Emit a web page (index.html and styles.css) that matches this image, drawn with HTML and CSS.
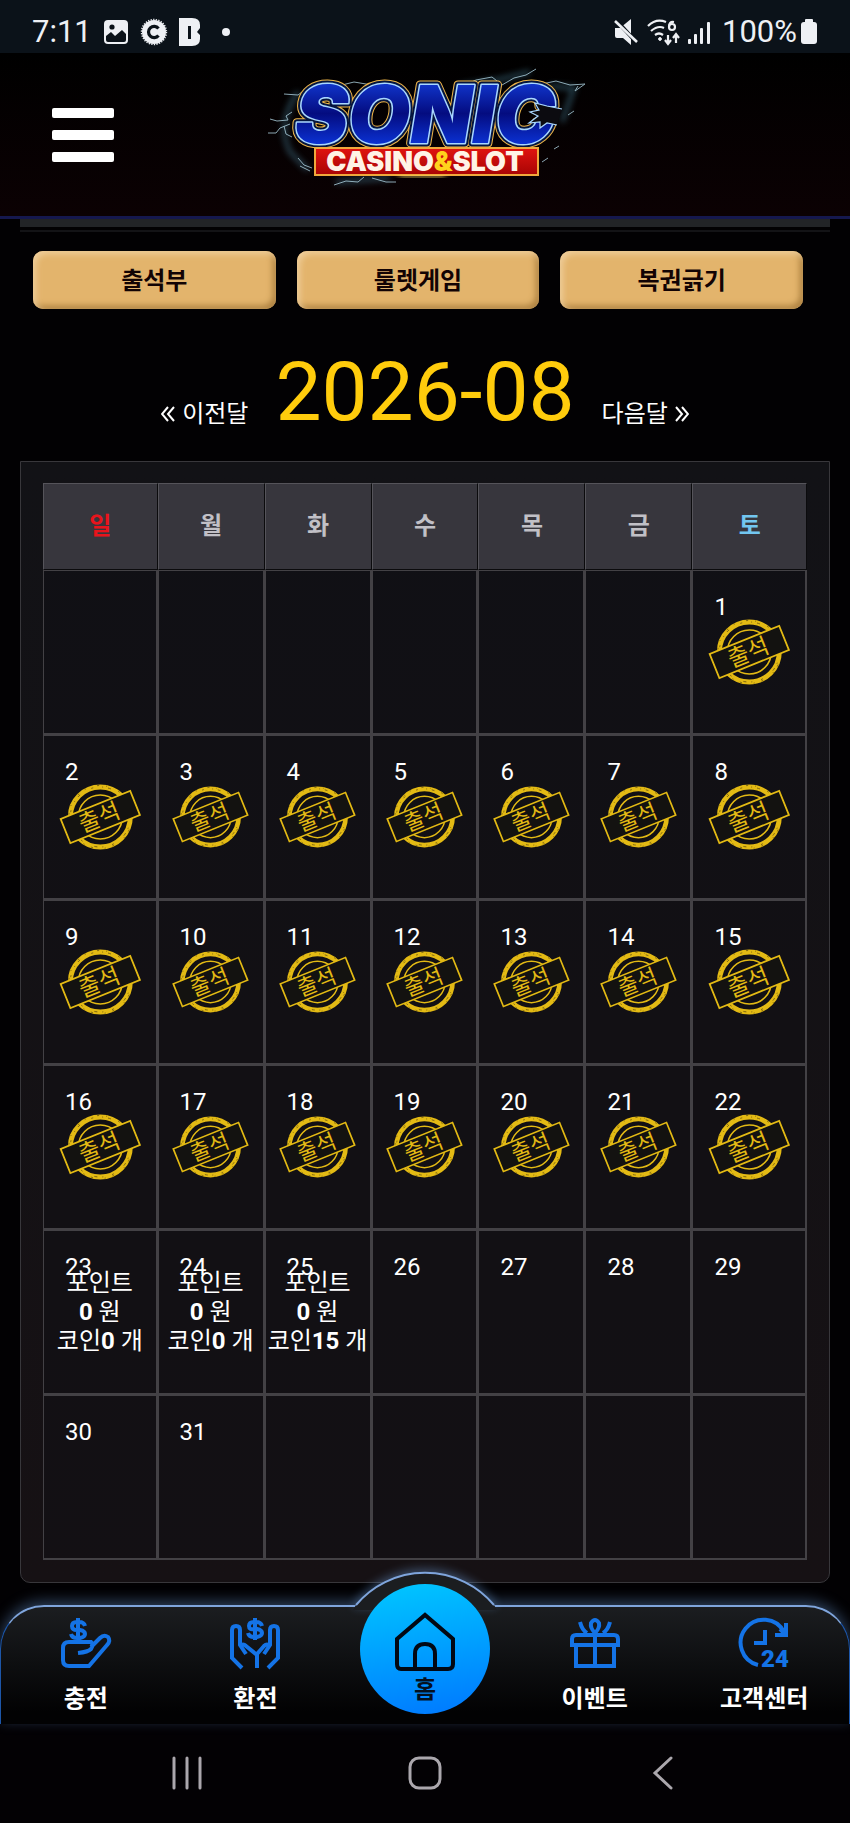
FILE: index.html
```html
<!DOCTYPE html>
<html lang="ko">
<head>
  <meta charset="UTF-8" />
  <meta name="viewport" content="width=device-width, initial-scale=1.0" />
  <title>출석부</title>
  <link rel="stylesheet" href="styles.css">
</head>
<body>
  <!-- shared symbols -->
  <svg class="defs" width="0" height="0" aria-hidden="true">
    <symbol id="stamp" viewBox="0 0 82 68">
      <g fill="none" stroke="#e3ba14">
        <circle cx="41" cy="34" r="30" stroke-width="5" />
        <circle cx="41" cy="34" r="22" stroke-width="1.6" />
        <circle cx="41" cy="34" r="30" stroke="#7a6310" stroke-width="1" stroke-dasharray="2 9 1 5 3 13" />
        <circle cx="41" cy="34" r="31.5" stroke="#7a6310" stroke-width="1" stroke-dasharray="1 12 2 7" />
        <g transform="rotate(-22 41 34)">
          <rect x="3.5" y="21" width="75" height="26" fill="#131210" stroke-width="1.8" />
        </g>
      </g>
      <text class="stamp-text" x="40" y="42" text-anchor="middle" transform="rotate(-22 41 34)">출석</text>
    </symbol>
  </svg>

  <div class="status-bar">
    <div class="status-left">
      <span class="clock">7:11</span>
      <svg width="26" height="28" viewBox="0 0 26 28">
        <rect x="1" y="2" width="24" height="24" rx="4" fill="#eef0f4" />
        <circle cx="9" cy="9" r="2.6" fill="#0b1219" />
        <path d="M3 18l5-4 4 4 7-6 4 4v6a2 2 0 0 1-2 2H5a2 2 0 0 1-2-2z" fill="#0b1219" />
      </svg>
      <svg width="28" height="28" viewBox="0 0 28 28">
        <circle cx="14" cy="14" r="12" fill="#eef0f4" />
        <circle cx="14" cy="14" r="12.4" fill="none" stroke="#eef0f4" stroke-width="1.6" stroke-dasharray="1.3 1.3" />
        <path d="M18.5 10.5a5.6 5.6 0 1 0 0 7" fill="none" stroke="#0b1219" stroke-width="3.2" />
      </svg>
      <svg width="22" height="28" viewBox="0 0 22 28">
        <path d="M0 0h13q8 0 8 7v3l-3 4 3 3v4q0 7-8 7H0z" fill="#eef0f4" />
        <path d="M10.5 8v13" stroke="#0b1219" stroke-width="3" />
      </svg>
      <i class="dot"></i>
    </div>
    <div class="status-right">
      <svg width="26" height="28" viewBox="0 0 26 28">
        <path d="M2 10h5l11-9v26l-8-7H4a2 2 0 0 1-2-2z" fill="#eef0f4" />
        <path d="M1 0l24 26" stroke="#0b1219" stroke-width="4" />
        <path d="M2 3l22 21" stroke="#eef0f4" stroke-width="2.6" />
      </svg>
      <svg width="34" height="28" viewBox="0 0 34 28" fill="none" stroke="#eef0f4" stroke-width="2.2">
        <path d="M2 8Q10 0 20 4M5 13q7-6 13-3M9 17q4-3 8 0" />
        <circle cx="14" cy="21" r="1.4" fill="#eef0f4" stroke-width="1" />
        <path d="M28 4q-5-1-5 5" />
        <circle cx="26" cy="9" r="3" />
        <path d="M22 17v8m-3-3l3 4 3-4M30 25v-8m-3 3l3-4 3 4" />
      </svg>
      <svg width="24" height="28" viewBox="0 0 24 28" fill="#eef0f4">
        <rect x="1" y="21" width="3" height="5" rx="1" />
        <rect x="7" y="16" width="3" height="10" rx="1" />
        <rect x="13" y="10" width="3" height="16" rx="1" />
        <rect x="20" y="4" width="3" height="22" rx="1" />
      </svg>
      <span class="battery-text">100%</span>
      <svg width="18" height="28" viewBox="0 0 18 28" fill="#eef0f4">
        <rect x="5" y="1" width="8" height="5" rx="1" />
        <rect x="1" y="4" width="16" height="22" rx="3" />
      </svg>
    </div>
  </div>

  <header class="site-header">
    <button class="menu-button" aria-label="메뉴"><i></i><i></i><i></i></button>
    <a href="#" class="logo" aria-label="Sonic Casino &amp; Slot">
      <svg width="340" height="150" viewBox="-5 0 340 150">
        <defs>
          <linearGradient id="blueFill" x1="0" y1="0" x2="0" y2="1">
            <stop offset="0.1" stop-color="#1440e0" />
            <stop offset=".5" stop-color="#040c80" />
            <stop offset="0.9" stop-color="#0d3be8" />
          </linearGradient>
          <linearGradient id="redFill" x1="0" y1="0" x2="0" y2="1">
            <stop offset="0" stop-color="#e01410" />
            <stop offset="1" stop-color="#a80404" />
          </linearGradient>
          <filter id="glow" x="-20%" y="-60%" width="140%" height="220%">
            <feGaussianBlur stdDeviation="3" />
          </filter>
        </defs>
        <g fill="none" stroke="#5aa5c4" stroke-width="4" filter="url(#glow)" opacity=".45">
          <path d="M38 32q-22 32-8 60l18 18M200 26l38-6 32-8M290 26l24 2-12 34M76 122l54-4" />
        </g>
        <g fill="none" stroke="#b9dfee" stroke-width="1" opacity=".75">
          <path d="M46 29l-8 6-14-1M32 52l-6 4 2 4-11 1-7-2M30 64l-10 4-4 5-8 0M24 66l2 8 6 3M38 98l6 7 8 3M40 106l10 5" />
          <path d="M82 25l12-3 18 3M200 27l16-7 16-3 10 8 12-7 12-3 10-6M282 24l14-3 14 4 15-1-10 7 3-5M308 55l6-4M294 89l5-3" />
          <path d="M74 125l12-4 12 1 6-5M112 118l14 4 10 0M282 102l6-4" />
        </g>
        <g class="logo-main" stroke-linejoin="round">
          <text x="35" y="83" fill="#ffdf7c" stroke="#eeb548" stroke-width="9">SONIC</text>
          <text x="35" y="83" fill="#04153e" stroke="#04153e" stroke-width="7">SONIC</text>
          <text x="35" y="83" fill="#a9d7ff" stroke="#a9d7ff" stroke-width="3">SONIC</text>
          <text x="35" y="83" fill="url(#blueFill)">SONIC</text>
        </g>
        <path d="M302 49l-15-3-12-3 4 7-9 2 8 4-9 7 11-1 0 6 7-5 10 2" fill="#0c0b10" stroke="#a9d7ff" stroke-width="1.2" />
        <rect x="55" y="88" width="223" height="27" fill="url(#redFill)" stroke="#f0a83c" stroke-width="2" />
        <path d="M140 116h44v1h-44z" stroke="#ffe36a" stroke-width="2" filter="url(#glow)" />
        <text class="logo-sub" x="165" y="111" text-anchor="middle">CASINO<tspan fill="#ffd21c">&amp;</tspan>SLOT</text>
      </svg>
    </a>
  </header>

  <main>
    <div class="top-strip"></div>

    <div class="tabs">
      <button>출석부</button>
      <button>룰렛게임</button>
      <button>복권긁기</button>
    </div>

    <div class="month-nav">
      <a href="#"><svg width="14" height="16" viewBox="0 0 14 16"><path d="M7 1L1 8l6 7M13 1L7 8l6 7" /></svg>이전달</a>
      <h1>2026-08</h1>
      <a href="#">다음달<svg width="14" height="16" viewBox="0 0 14 16"><path d="M1 1l6 7-6 7M7 1l6 7-6 7" /></svg></a>
    </div>

    <section class="panel">
      <table class="calendar">
        <colgroup><col class="edge"><col><col><col><col><col><col class="edge"></colgroup>
        <thead>
          <tr>
            <th class="sun">일</th><th>월</th><th>화</th><th>수</th><th>목</th><th>금</th><th class="sat">토</th>
          </tr>
        </thead>
        <tbody>
          <tr>
            <td></td><td></td><td></td><td></td><td></td><td></td>
            <td><div class="day"><span>1</span><svg class="stamp"><use href="#stamp" /></svg></div></td>
          </tr>
          <tr>
            <td><div class="day"><span>2</span><svg class="stamp"><use href="#stamp" /></svg></div></td>
            <td><div class="day"><span>3</span><svg class="stamp"><use href="#stamp" /></svg></div></td>
            <td><div class="day"><span>4</span><svg class="stamp"><use href="#stamp" /></svg></div></td>
            <td><div class="day"><span>5</span><svg class="stamp"><use href="#stamp" /></svg></div></td>
            <td><div class="day"><span>6</span><svg class="stamp"><use href="#stamp" /></svg></div></td>
            <td><div class="day"><span>7</span><svg class="stamp"><use href="#stamp" /></svg></div></td>
            <td><div class="day"><span>8</span><svg class="stamp"><use href="#stamp" /></svg></div></td>
          </tr>
          <tr>
            <td><div class="day"><span>9</span><svg class="stamp"><use href="#stamp" /></svg></div></td>
            <td><div class="day"><span>10</span><svg class="stamp"><use href="#stamp" /></svg></div></td>
            <td><div class="day"><span>11</span><svg class="stamp"><use href="#stamp" /></svg></div></td>
            <td><div class="day"><span>12</span><svg class="stamp"><use href="#stamp" /></svg></div></td>
            <td><div class="day"><span>13</span><svg class="stamp"><use href="#stamp" /></svg></div></td>
            <td><div class="day"><span>14</span><svg class="stamp"><use href="#stamp" /></svg></div></td>
            <td><div class="day"><span>15</span><svg class="stamp"><use href="#stamp" /></svg></div></td>
          </tr>
          <tr>
            <td><div class="day"><span>16</span><svg class="stamp"><use href="#stamp" /></svg></div></td>
            <td><div class="day"><span>17</span><svg class="stamp"><use href="#stamp" /></svg></div></td>
            <td><div class="day"><span>18</span><svg class="stamp"><use href="#stamp" /></svg></div></td>
            <td><div class="day"><span>19</span><svg class="stamp"><use href="#stamp" /></svg></div></td>
            <td><div class="day"><span>20</span><svg class="stamp"><use href="#stamp" /></svg></div></td>
            <td><div class="day"><span>21</span><svg class="stamp"><use href="#stamp" /></svg></div></td>
            <td><div class="day"><span>22</span><svg class="stamp"><use href="#stamp" /></svg></div></td>
          </tr>
          <tr>
            <td><div class="day"><span>23</span><p>포인트<br><b>0</b> 원<br>코인<b>0</b> 개</p></div></td>
            <td><div class="day"><span>24</span><p>포인트<br><b>0</b> 원<br>코인<b>0</b> 개</p></div></td>
            <td><div class="day"><span>25</span><p>포인트<br><b>0</b> 원<br>코인<b>15</b> 개</p></div></td>
            <td><div class="day"><span>26</span></div></td>
            <td><div class="day"><span>27</span></div></td>
            <td><div class="day"><span>28</span></div></td>
            <td><div class="day"><span>29</span></div></td>
          </tr>
          <tr>
            <td><div class="day"><span>30</span></div></td>
            <td><div class="day"><span>31</span></div></td>
            <td></td><td></td><td></td><td></td><td></td>
          </tr>
        </tbody>
      </table>
    </section>
  </main>

  <nav class="bottom-nav">
    <svg class="hump" width="200" height="70" viewBox="0 0 200 70" aria-hidden="true">
      <path d="M28 54l3-5a90 90 0 0 1 138 0l3 5z" fill="#1b1d20" />
      <path d="M31 49a90 90 0 0 1 138 0" fill="none" stroke="#7fa5dc" stroke-width="2" />
    </svg>
    <a href="#">
      <svg width="50" height="50" viewBox="0 0 50 50">
        <path d="M24 8q-1-4-6-4h-2q-5 0-5 4t5 4h3q5 1 5 4t-5 4h-3q-5 0-6-4M17 0v24M2 30q0-6 6-6h22q3 3 0 7-3 3-13 4M30 29l9-9q4-4 8-1 3 4-1 8L28 48H8q-6 0-6-6V30" />
      </svg>
      충전
    </a>
    <a href="#">
      <svg width="50" height="50" viewBox="0 0 50 50">
        <path d="M32 8q-1-4-6-4h-2q-5 0-5 4t5 3h3q5 1 5 4t-5 4h-3q-5 0-6-4M25 0v22" />
        <path d="M12 50L2 40V12q0-4 4-4t4 4v15l6 9M10 28q3-3 6 0l11 9M27 34v16M38 50l10-10V12q0-4-4-4t-4 4v15l-6 9M40 28q-3-3-6 0l-7 8" />
      </svg>
      환전
    </a>
    <a href="#" class="home">
      <svg width="60" height="60" viewBox="0 0 60 60">
        <path d="M6 57q-4 0-4-5V27L30 3l28 24v25q0 5-5 5zM20 57V42q0-10 10-10t10 10v15" />
      </svg>
      홈
    </a>
    <a href="#">
      <svg width="50" height="50" viewBox="0 0 50 50">
        <path d="M2 27v-6q0-4 4-4h38q4 0 4 4v6zM6 27v21h38V27M25 17v31M25 15q-5-5-4-10 4-6 8 0 1 5-4 10zM10 4q2 8 7 11M40 4q-2 8-7 11" />
      </svg>
      이벤트
    </a>
    <a href="#">
      <svg width="50" height="50" viewBox="0 0 50 50">
        <path d="M19 47A23 23 0 1 1 45 14M36 17h11V5M46 16l-5-5M26 12v13H15" />
        <text class="icon-24" x="22" y="49">24</text>
      </svg>
      고객센터
    </a>
  </nav>

  <div class="system-nav">
    <button aria-label="최근 앱"><svg width="34" height="34" viewBox="0 0 34 34"><path d="M4 2v30M17 2v30M30 2v30" /></svg></button>
    <button aria-label="홈 화면"><svg width="34" height="34" viewBox="0 0 34 34"><rect x="2" y="2" width="30" height="30" rx="9" /></svg></button>
    <button aria-label="뒤로"><svg width="34" height="34" viewBox="0 0 34 34"><path d="M25 2L9 17l16 15" /></svg></button>
  </div>
</body>
</html>
```
FILE: styles.css
```css
* {
  box-sizing: border-box;
}

body {
  margin: 0;
  background-color: #020103;
  color: #ffffff;
  font-family: Roboto, "Noto Sans CJK KR", sans-serif;
  font-size: 24px;
}

a {
  color: inherit;
  text-decoration: none;
}

button {
  border: 0;
  padding: 0;
  background: none;
  color: inherit;
  font: inherit;
}

svg {
  display: block;
}

.defs {
  position: absolute;
}

/* phone status bar */
.status-bar {
  display: flex;
  justify-content: space-between;
  height: 53px;
  padding: 10px 32px 0;
  background-color: #0b1219;
  color: #eef0f4;
}

.status-left,
.status-right {
  display: flex;
  align-items: center;
  height: 44px;
}

.status-left {
  gap: 11px;
}

.status-right {
  gap: 7px;
}

.clock,
.battery-text {
  font-size: 31px;
  line-height: 44px;
}

.battery-text {
  margin: 0 -4px 0 4px;
}

.dot {
  width: 8px;
  height: 8px;
  margin-left: 10px;
  border-radius: 50%;
  background-color: #eef0f4;
}

/* header */
.site-header {
  display: grid;
  grid-template-columns: 1fr auto 1fr;
  align-items: center;
  height: 166px;
  border-bottom: 3px solid #15184e;
  background: linear-gradient(#000000, #0b0103);
}

.menu-button {
  display: grid;
  gap: 12px;
  width: 62px;
  margin-left: 52px;
}

.menu-button i {
  height: 10px;
  border-radius: 2px;
  background-color: #ffffff;
}

.logo-main {
  font-family: Inter, sans-serif;
  font-size: 80px;
  font-weight: 900;
  font-style: italic;
}

.logo-sub {
  font-family: Inter, sans-serif;
  font-size: 27px;
  font-weight: 900;
  fill: #fff3e6;
}

main {
  margin: 0 20px;
}

.top-strip {
  height: 13px;
  border-top: 8px solid #222427;
  border-bottom: 2px solid #131316;
}

/* tabs */
.tabs {
  display: grid;
  grid-template-columns: repeat(3, 1fr);
  gap: 21px;
  padding: 19px 27px 0 13px;
}

.tabs button {
  height: 58px;
  padding-bottom: 4px;
  border-radius: 10px;
  background-color: #e3b46c;
  box-shadow: inset 3px 3px 6px #f0cf9c, inset -3px -3px 6px #a87c3c;
  color: #120304;
  font-weight: bold;
}

/* month */
.month-nav {
  display: flex;
  justify-content: center;
  align-items: flex-end;
  gap: 27px;
  height: 100px;
  margin: 33px 0 19px;
}

.month-nav h1 {
  margin: 0;
  color: #ffcc0c;
  font-size: 82px;
  font-weight: 400;
  line-height: 100px;
}

.month-nav a {
  display: flex;
  align-items: baseline;
  gap: 7px;
  padding-bottom: 10px;
  line-height: 36px;
}

.month-nav path {
  fill: none;
  stroke: #ffffff;
  stroke-width: 2;
}

/* calendar */
.panel {
  padding: 21px 22px 22px;
  border: 1px solid #38373b;
  border-radius: 0 0 10px 10px;
  background: linear-gradient(#121216, #161114);
}

.calendar {
  width: 100%;
  table-layout: fixed;
  border-spacing: 0;
}

.calendar .edge {
  width: 15%;
}

.calendar th {
  height: 87px;
  padding: 0 0 6px;
  border: 1px solid;
  border-color: #55545a #0b0b0d #0b0b0d #55545a;
  background-color: #37363d;
  color: #c1c0c6;
}

.calendar th.sun {
  color: #e8141c;
}

.calendar th.sat {
  color: #72c6f0;
}

.calendar td {
  height: 165px;
  padding: 0;
  border: solid #434145;
  border-width: 1px 2px 2px 1px;
  background-color: rgba(16, 16, 20, .4);
  vertical-align: top;
}

/* date and mark share one grid cell so the mark stays centred */
.day {
  display: grid;
  height: 162px;
}

.day > * {
  grid-area: 1 / 1;
}

.day span {
  padding: 20px 0 0 21px;
  line-height: 32px;
}

.day p {
  align-self: center;
  margin: 0;
  line-height: 29px;
  text-align: center;
  white-space: nowrap;
}

.stamp {
  place-self: center;
  width: 74%;
  height: 68px;
}

.stamp-text {
  fill: #e3ba14;
  font-family: "Noto Sans CJK KR", sans-serif;
  font-size: 23px;
}

/* bottom menu */
.bottom-nav {
  position: relative;
  display: grid;
  grid-template-columns: repeat(5, 1fr);
  height: 119px;
  margin-top: 22px;
  border: solid;
  border-width: 2px 1px 0;
  border-color: #7fa5dc #1d56a8;
  border-radius: 44px 44px 0 0;
  background: linear-gradient(#1b1d20, #020203 90%);
  box-shadow: 0 -4px 14px rgba(110, 160, 220, .4);
}

.hump {
  position: absolute;
  top: -51px;
  left: 50%;
  transform: translateX(-50%);
  filter: drop-shadow(0 -3px 5px rgba(110, 160, 220, .4));
}

.bottom-nav a {
  display: flex;
  flex-direction: column;
  align-items: center;
  gap: 14px;
  padding-top: 11px;
  font-weight: bold;
  line-height: 34px;
}

.bottom-nav a svg {
  fill: none;
  stroke: #1473e6;
  stroke-width: 4;
  overflow: visible;
}

.bottom-nav .icon-24 {
  fill: #1473e6;
  stroke: none;
  font-size: 24px;
  font-weight: 900;
}

.bottom-nav .home {
  position: relative;
  justify-self: center;
  width: 130px;
  height: 130px;
  margin-top: -23px;
  padding-top: 28px;
  gap: 1px;
  border-radius: 50%;
  background: linear-gradient(170deg, #00c8ff, #0077ff);
  color: #04101f;
}

.bottom-nav .home svg {
  stroke: #020814;
}

/* android buttons */
.system-nav {
  display: grid;
  grid-template-columns: repeat(3, 1fr);
  height: 98px;
  padding: 0 8%;
  background-color: #030104;
}

.system-nav button {
  display: grid;
  place-items: center;
}

.system-nav svg {
  fill: none;
  stroke: #aba7ad;
  stroke-width: 3;
  stroke-linecap: round;
}
```
